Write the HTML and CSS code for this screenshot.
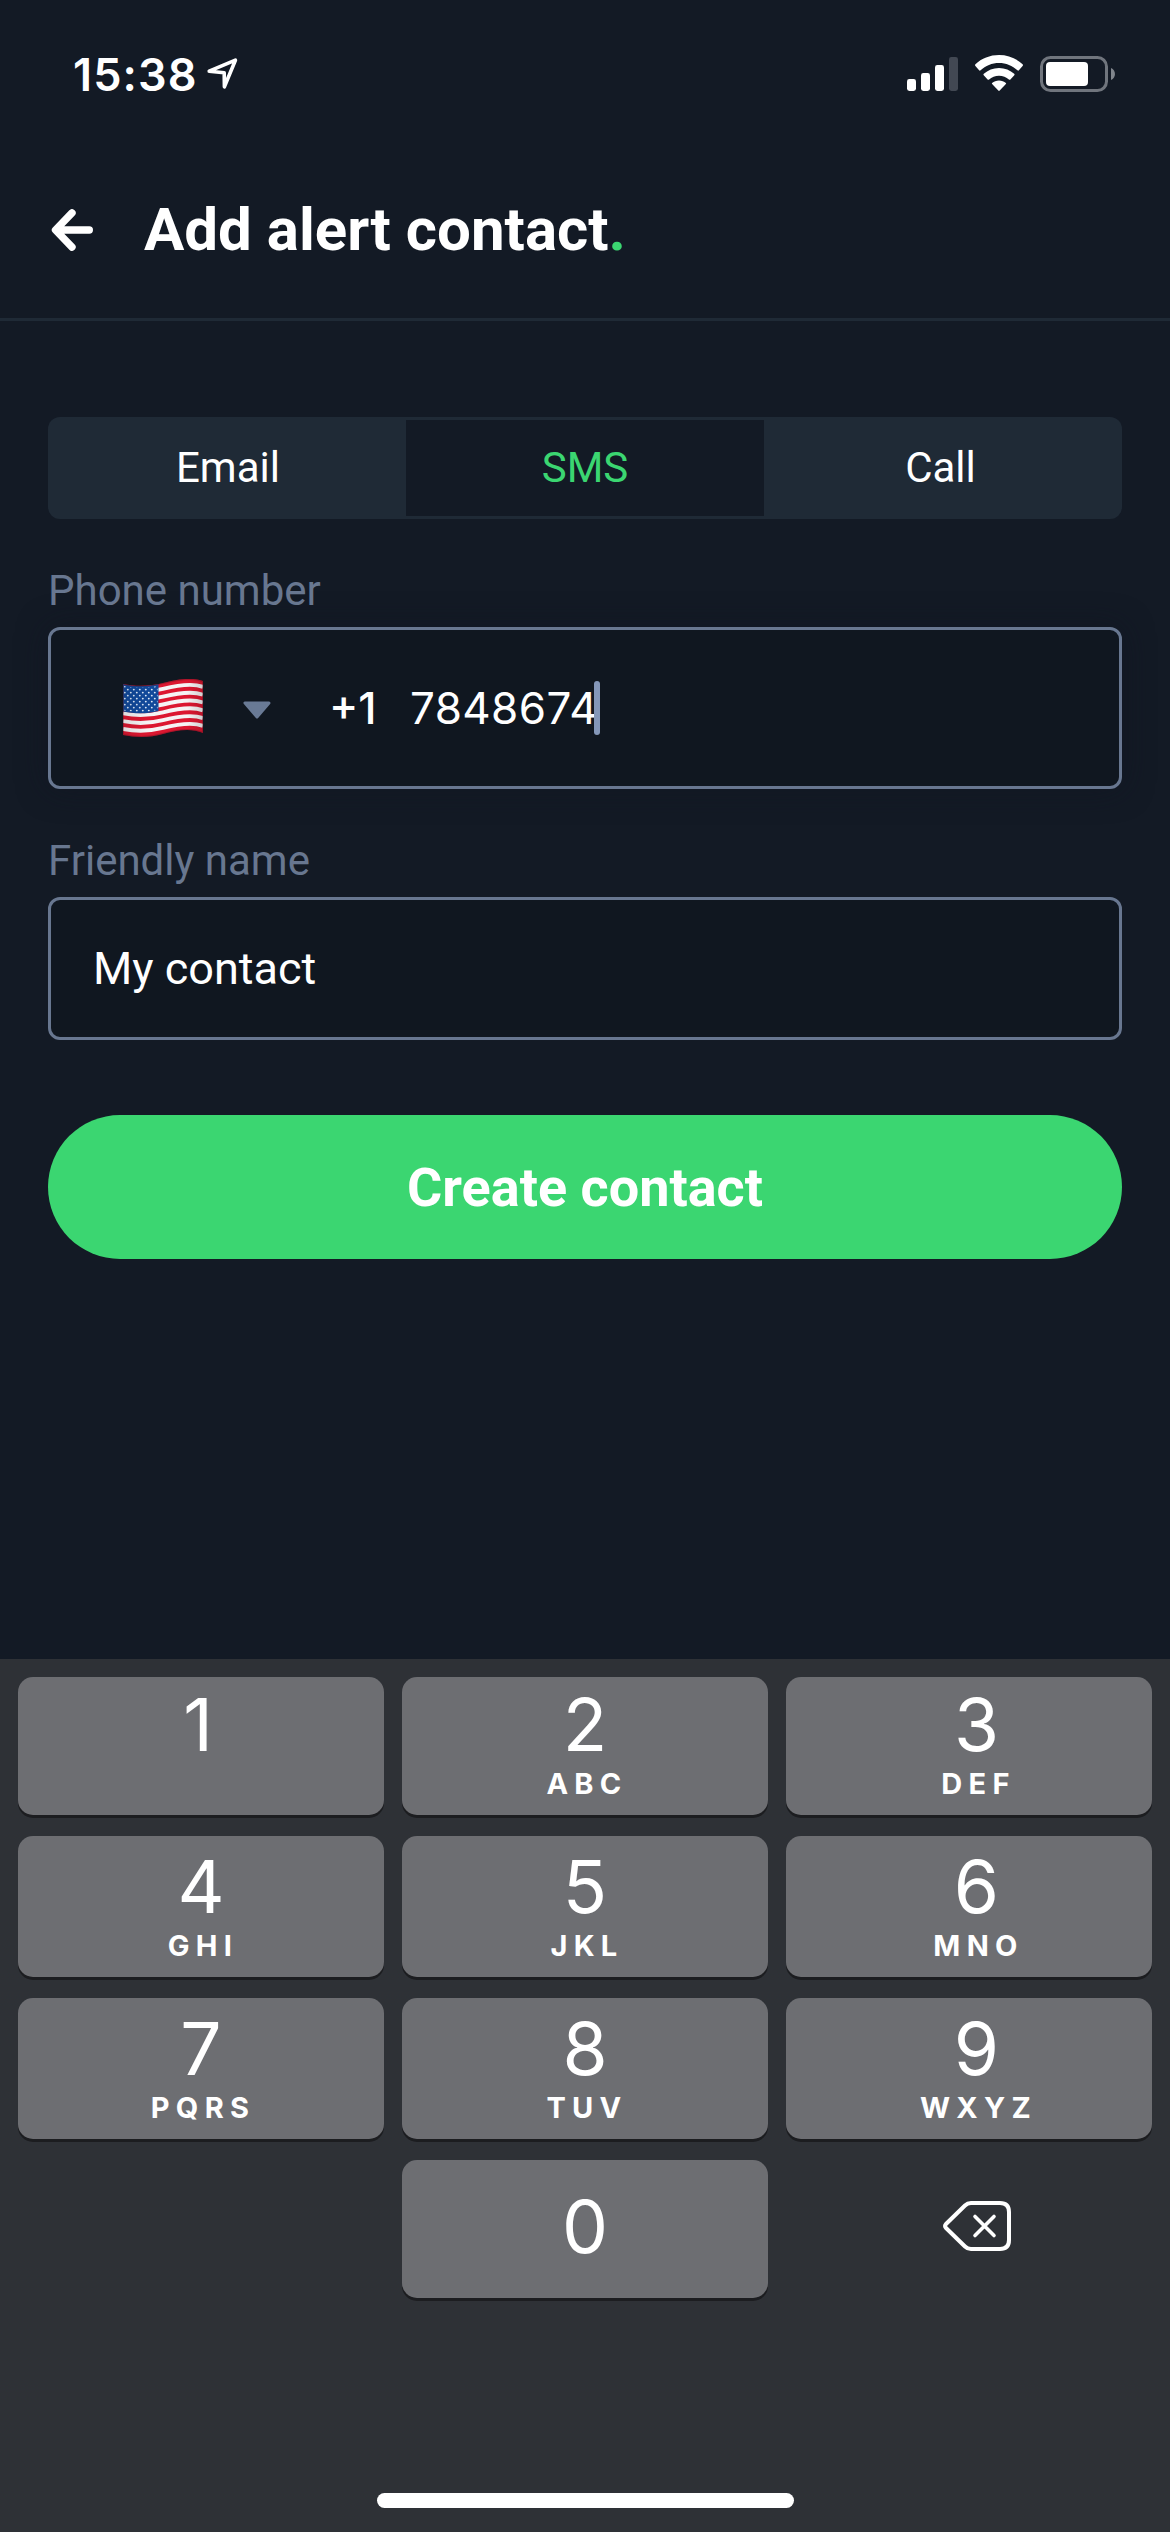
FILE: index.html
```html
<!DOCTYPE html>
<html lang="en">
<head>
<meta charset="utf-8">
<title>Add alert contact</title>
<link rel="stylesheet" href="styles.css">
</head>
<body>
<div class="screen">
  <div class="status">
    <div class="status-left">
      <span class="time">15:38</span>
      <svg class="location" width="34" height="34" viewBox="0 0 34 34"><path d="M3.2 14.2 29.4 3.2 18.4 29.8 18.2 15.8Z" fill="none" stroke="#fff" stroke-width="3.6" stroke-linejoin="round"/></svg>
    </div>
    <div class="status-right">
      <svg width="51" height="34" viewBox="0 0 51 34" fill="#fff"><rect y="22" width="9" height="12" rx="2.4"/><rect x="14" y="16" width="9" height="18" rx="2.4"/><rect x="28" y="8" width="9" height="26" rx="2.4"/><rect x="42" width="9" height="34" rx="2.4" fill="#424853"/></svg>
      <svg class="wifi" width="48" height="36" viewBox="0 0 48 36" fill="#fff"><path d="M24 0C33 0 41.500 3.400 47.600 9.300Q48.400 10.100 47.600 10.900L43.900 15.300Q43.200 16 42.400 15.300C37.500 10.700 31 8 24 8S10.500 10.700 5.600 15.300Q4.800 16 4.100 15.300L.4 10.900Q-.4 10.100 .4 9.300C6.500 3.400 15 0 24 0Z"/><path d="M24 12.900C29.900 12.900 35.200 15.100 39.200 18.700Q40 19.500 39.300 20.200L35.400 24.400Q34.700 25.100 33.900 24.400C31.300 22.100 27.800 20.700 24 20.700S16.700 22.100 14.100 24.400Q13.300 25.100 12.600 24.400L8.700 20.200Q8 19.500 8.800 18.700C12.800 15.100 18.100 12.900 24 12.900Z"/><path d="M24 25.400C26.700 25.400 29.100 26.300 30.900 27.900Q31.300 28.400 30.900 28.900L24.700 35.600Q24 36.200 23.300 35.600L17.100 28.900Q16.700 28.400 17.100 27.900C18.900 26.300 21.300 25.400 24 25.400Z"/></svg>
      <svg class="battery" width="76" height="36" viewBox="0 0 76 36"><rect x="1.500" y="1.500" width="65" height="33" rx="9" fill="none" stroke="#70757d" stroke-width="3"/><rect x="6" y="6" width="42" height="24" rx="4" fill="#fff"/><path d="M71 12C76.300 14 76.300 22 71 24Z" fill="#80858c"/></svg>
    </div>
  </div>

  <header class="header">
    <svg class="back" width="42" height="42" viewBox="0 0 42 42" fill="none" stroke="#fff" stroke-width="7.400" stroke-linecap="round" stroke-linejoin="round"><path d="M21 3.900 4.500 21 21 38.100M5 21H38.300"/></svg>
    <h1 class="title">Add alert contact<span class="dot">.</span></h1>
  </header>

  <main class="form">
    <div class="tabs">
      <div class="tab email">Email</div>
      <div class="tab active">SMS</div>
      <div class="tab call">Call</div>
    </div>

    <div class="label">Phone number</div>
    <div class="field phone">
      <svg class="flag" width="80" height="58" viewBox="0 0 80 58">
        <defs>
          <clipPath id="cloth"><path d="M0 5C14 8 28 7 40 4S68 -2.500 80 2V54C68 48.500 52 51.500 40 55S14 59 0 56Z"/></clipPath>
          <linearGradient id="fold" x1="0" x2="1" y1="0" y2="0"><stop offset="0" stop-color="#000" stop-opacity=".1"/><stop offset=".3" stop-color="#000" stop-opacity="0"/><stop offset=".8" stop-color="#000" stop-opacity="0"/><stop offset="1" stop-color="#000" stop-opacity=".15"/></linearGradient>
          <pattern id="stars" width="6" height="6" patternUnits="userSpaceOnUse"><circle cx="1.800" cy="1.600" r=".95" fill="#dbe8f7"/><circle cx="4.800" cy="4.600" r=".95" fill="#dbe8f7"/></pattern>
          <path id="wave" d="M0 5C14 8 28 7 40 4S68 -2.500 80 2"/>
        </defs>
        <g clip-path="url(#cloth)">
          <rect width="80" height="58" fill="#dc1730"/>
          <g fill="none" stroke="#f5f3f4" stroke-width="3.900">
            <use href="#wave" y="5.900"/><use href="#wave" y="13.700"/><use href="#wave" y="21.500"/><use href="#wave" y="29.300"/><use href="#wave" y="37.100"/><use href="#wave" y="44.900"/>
          </g>
          <path d="M0 5C12 8 24 7.500 35.500 5V32C24 35 12 35 0 32.500Z" fill="#11499a"/>
          <path d="M1 7C12 9 24 9 34.500 7V31C24 33.500 12 33.500 1 31.500Z" fill="url(#stars)"/>
          <rect width="80" height="58" fill="url(#fold)"/>
          <path d="M0 5C14 8 28 7 40 4S68 -2.500 80 2V54C68 48.500 52 51.500 40 55S14 59 0 56Z" fill="none" stroke="#5a1020" stroke-opacity=".35" stroke-width="2"/>
        </g>
      </svg>
      <svg class="caret" width="28" height="18" viewBox="0 0 28 18"><path d="M2 2H26L14 16Z" fill="#697a95" stroke="#697a95" stroke-width="3" stroke-linejoin="round"/></svg>
      <span class="code">+1</span>
      <span class="number">7848674</span>
      <span class="cursor"></span>
    </div>

    <div class="label">Friendly name</div>
    <div class="field name">My contact</div>

    <div class="submit">Create contact</div>
  </main>

  <section class="keyboard">
    <div class="keys">
      <div class="key"><span class="digit one">1</span><span class="letters"></span></div>
      <div class="key"><span class="digit">2</span><span class="letters">ABC</span></div>
      <div class="key last"><span class="digit">3</span><span class="letters">DEF</span></div>
      <div class="key"><span class="digit">4</span><span class="letters">GHI</span></div>
      <div class="key"><span class="digit">5</span><span class="letters">JKL</span></div>
      <div class="key last"><span class="digit">6</span><span class="letters">MNO</span></div>
      <div class="key"><span class="digit">7</span><span class="letters">PQRS</span></div>
      <div class="key"><span class="digit">8</span><span class="letters">TUV</span></div>
      <div class="key last"><span class="digit">9</span><span class="letters">WXYZ</span></div>
      <div></div>
      <div class="key zero"><span class="digit">0</span></div>
      <div class="delete">
        <svg width="68" height="50" viewBox="0 0 68 50" fill="none" stroke="#fff" stroke-width="4" stroke-linecap="round" stroke-linejoin="round"><path d="M28 2H57Q66 2 66 11V39Q66 48 57 48H28Q24.500 48 22 45.500L3 27Q1 25 3 23L22 4.500Q24.500 2 28 2Z"/><path d="M32 15.500 51 34.500M51 15.500 32 34.500" stroke-width="3.600"/></svg>
      </div>
    </div>
    <div class="home"></div>
  </section>
</div>
</body>
</html>
```
FILE: styles.css
```css
* { box-sizing: border-box; }

body { margin: 0; background: #131a25; }

.screen {
  display: flex;
  flex-direction: column;
  width: 1170px;
  height: 2532px;
  overflow: hidden;
  background: #131a25;
  color: #fff;
  font-family: Roboto, sans-serif;
}

/* Status bar */
.status {
  display: flex;
  justify-content: space-between;
  height: 142px;
  padding: 45px 54px 0 73px;
}
.status-left, .status-right { display: flex; align-items: flex-start; }
.time {
  font: 600 45px/60px Inter, sans-serif;
  width: 133px;
  letter-spacing: 1.1px;
  white-space: nowrap;
}
.location { margin-top: 12px; }
.status-right { padding-top: 12px; }
.wifi { margin: -2px 17px 0; }
.battery { margin-top: -1px; }

/* Title row */
.header {
  display: flex;
  align-items: center;
  height: 179px;
  padding: 0 51px;
  gap: 51px;
  border-bottom: 3px solid #1f2a36;
}
.title { margin: 0; font-size: 60px; line-height: 70px; font-weight: 700; }
.dot { color: #3bd671; }

/* Form */
.form { flex: 1; padding: 96px 48px 0; }
.tabs {
  display: grid;
  grid-template-columns: repeat(3, 1fr);
  height: 102px;
  padding: 3px 0;
  border-radius: 12px;
  background: #1f2a36;
}
.tab { font-size: 42px; line-height: 96px; text-align: center; }
.tab.email { padding-left: 2px; }
.tab.call { padding-right: 5px; }
.tab.active { background: #131a25; color: #3bd671; }

.label {
  margin: 47px 0 11px;
  color: #687790;
  font-size: 42px;
  line-height: 50px;
}
.field {
  display: flex;
  align-items: center;
  border: 3px solid #687790;
  border-radius: 12px;
  background: #101720;
}
.phone {
  height: 162px;
  padding-left: 72px;
  font: 400 44px/54px Inter, sans-serif;
  box-shadow: 0 0 30px rgba(16, 20, 32, .5);
}
.caret { margin: 4px 58px 0 40px; }
.code { width: 81px; font-weight: 500; }
.number { width: 184px; white-space: nowrap; letter-spacing: 0.4px; }
.cursor { width: 6px; height: 54px; border-radius: 3px; background: #8497b8; }
.name { height: 143px; padding-left: 42px; font-size: 45px; }

.submit {
  margin-top: 75px;
  height: 144px;
  border-radius: 72px;
  background: #3bd671;
  font-size: 54px;
  font-weight: 700;
  line-height: 145px;
  text-align: center;
}

/* Keyboard */
.keyboard {
  display: flex;
  flex-direction: column;
  justify-content: space-between;
  align-items: center;
  height: 873px;
  padding: 18px 18px 24px;
  background: #2e3136;
}
.keys {
  display: grid;
  width: 100%;
  grid-template-columns: repeat(3, 1fr);
  grid-template-rows: 138px 141px 141px 138px;
  gap: 21px 18px;
}
.key {
  display: flex;
  flex-direction: column;
  justify-content: flex-end;
  align-items: center;
  padding-bottom: 16px;
  border-radius: 15px;
  background: #6d6e72;
  box-shadow: 0 3px 0 #1c1d20;
  font-family: Inter, sans-serif;
}
.key.last { padding-left: 15px; }
.digit { font-size: 73px; line-height: 60px; }
.one { padding-right: 6px; }
.letters {
  height: 30px;
  margin-top: 14px;
  padding-left: 4px;
  font-size: 29px;
  font-weight: 700;
  line-height: 30px;
  letter-spacing: 6.3px;
}
.zero { padding-bottom: 41px; }
.delete { display: flex; align-items: center; justify-content: center; padding: 0 0 6px 16px; }
.home { width: 417px; height: 15px; border-radius: 8px; background: #fff; }
```
